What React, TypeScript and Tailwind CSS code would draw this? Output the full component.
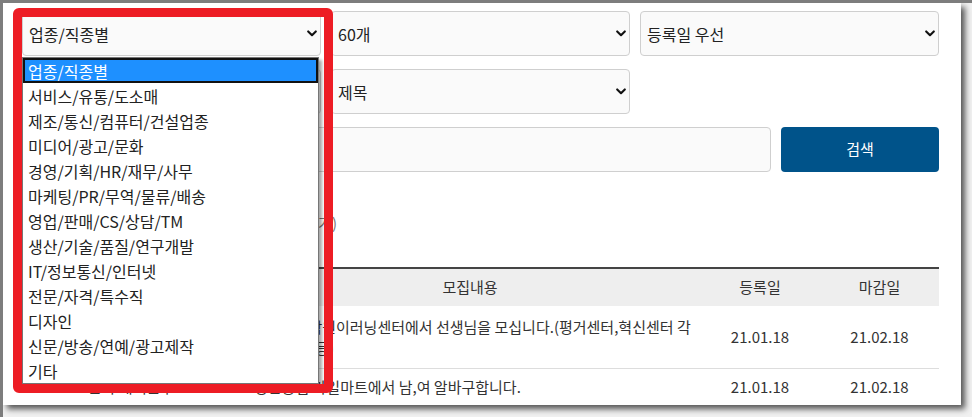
import React from "react";

const CATEGORIES = [
  "업종/직종별",
  "서비스/유통/도소매",
  "제조/통신/컴퓨터/건설업종",
  "미디어/광고/문화",
  "경영/기획/HR/재무/사무",
  "마케팅/PR/무역/물류/배송",
  "영업/판매/CS/상담/TM",
  "생산/기술/품질/연구개발",
  "IT/정보통신/인터넷",
  "전문/자격/특수직",
  "디자인",
  "신문/방송/연예/광고제작",
  "기타",
];

function Chevron() {
  return (
    <svg width="10" height="7" viewBox="0 0 10 7" className="shrink-0">
      <path d="M1.2 1.4 L5 5.2 L8.8 1.4" fill="none" stroke="#111" strokeWidth="2.1" strokeLinecap="round" strokeLinejoin="round" />
    </svg>
  );
}

function FakeSelect({ value }: { value: string }) {
  return (
    <div className="h-[45px] flex items-center justify-between pl-[6px] pr-[3px] bg-[#fafafa] border border-[#cfcfcf] rounded-[4px] text-[16px] text-[#222]">
      <span>{value}</span>
      <Chevron />
    </div>
  );
}

export default function App() {
  return (
    <div className="w-[972px] h-[417px] overflow-hidden bg-[#f1f1f1] border-t-[3px] border-l-[3px] border-[#7d7d7d] font-['Noto_Sans_CJK_KR','Noto_Sans',sans-serif]">
      <div className="relative w-[958px] h-[402px] bg-white shadow-[4px_4px_6px_rgba(0,0,0,0.65)] overflow-hidden pl-[19px] pr-[22px] pt-[8px]">
        {/* filters */}
        <div className="flex flex-col gap-[13px]">
          <div className="grid grid-cols-3 gap-[10px]">
            <FakeSelect value="업종/직종별" />
            <FakeSelect value="60개" />
            <FakeSelect value="등록일 우선" />
          </div>
          <div className="grid grid-cols-3 gap-[10px]">
            <FakeSelect value="" />
            <FakeSelect value="제목" />
          </div>
          <div className="flex gap-[10px]">
            <div className="flex-1 h-[45px] bg-[#fafafa] border border-[#cfcfcf] rounded-[4px]" />
            <button className="w-[158px] h-[45px] bg-[#00538a] rounded-[4px] text-white text-[15px]">검색</button>
          </div>
        </div>

        {/* count */}
        <div className="mt-[40px] h-[24px] w-[315px] flex justify-end text-[15px] text-[#777] whitespace-nowrap">
          검색결과 총 2건 (신규 2건 추가)
        </div>

        {/* table */}
        <table className="mt-[31px] w-full border-t-2 border-[#444] text-[15px] text-[#333] table-fixed border-collapse">
          <colgroup>
            <col className="w-[218px]" />
            <col className="w-[460px]" />
            <col className="w-[120px]" />
            <col className="w-[119px]" />
          </colgroup>
          <thead>
            <tr className="bg-[#eeeeee] h-[38px]">
              <th className="font-normal"></th>
              <th className="font-normal">모집내용</th>
              <th className="font-normal">등록일</th>
              <th className="font-normal">마감일</th>
            </tr>
          </thead>
          <tbody>
            <tr className="h-[62px] border-b border-[#dddddd]">
              <td className="text-center"></td>
              <td className="pl-[27px] leading-[21px] whitespace-nowrap">
                진주수학원이러닝센터에서 선생님을 모십니다.(평거센터,혁신센터 각
                <br />
                모집 중 등)
              </td>
              <td className="text-center">21.01.18</td>
              <td className="text-center">21.02.18</td>
            </tr>
            <tr className="h-[38px]">
              <td className="text-center">본사 재택근무</td>
              <td className="pl-[14px]">성산동점 마일마트에서 남,여 알바구합니다.</td>
              <td className="text-center">21.01.18</td>
              <td className="text-center">21.02.18</td>
            </tr>
          </tbody>
        </table>

        {/* open dropdown list */}
        <div className="absolute left-[19px] top-[54px] w-[297px] bg-white border border-[#767676] shadow-[3px_3px_3px_rgba(0,0,0,0.35)] text-[16px] text-[#222]">
          {CATEGORIES.map((c, i) => (
            <div
              key={c}
              className={
                i === 0
                  ? "h-[25px] flex items-center pl-[5px] bg-[#1e90ff] text-white outline-2 outline-[#111] -outline-offset-2"
                  : "h-[25px] flex items-center pl-[5px]"
              }
            >
              {c}
            </div>
          ))}
        </div>

        {/* red highlight */}
        <div className="absolute left-[10px] top-[5px] w-[320px] h-[385px] border-[9px] border-[#ed1c24] rounded-[6px] pointer-events-none" />
      </div>
    </div>
  );
}
